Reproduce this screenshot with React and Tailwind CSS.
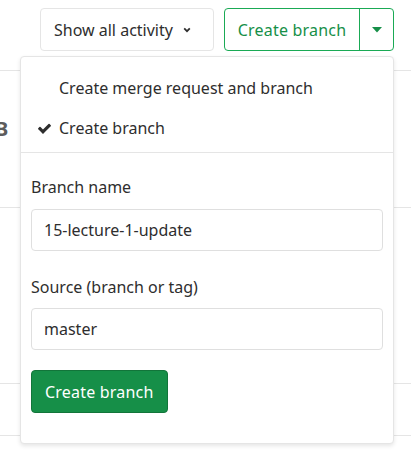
import React from "react"

function Check() {
  return (
    <svg viewBox="0 0 1792 1792" className="w-[15px] h-[15px]" fill="#2e2e2e">
      <path d="M1671 566q0 40-28 68l-724 724-136 136q-28 28-68 28t-68-28l-136-136-362-362q-28-28-28-68t28-68l136-136q28-28 68-28t68 28l294 295 656-657q28-28 68-28t68 28l136 136q28 28 28 68z" />
    </svg>
  )
}

export default function App() {
  return (
    <div className="relative w-[411px] h-[458px] bg-white text-[#2e2e2e] font-['Noto_Sans',sans-serif] text-[16px] overflow-hidden">
      <div className="flex justify-end gap-[10px] pt-2 pr-[17px]">
        <button className="h-[43px] w-[174px] flex items-center pl-[13px] border border-[#e5e5e5] rounded bg-white">
          <span>Show all activity</span>
          <svg viewBox="0 0 10 10" className="ml-[10px] w-[8px] h-[8px]" fill="none" stroke="#2e2e2e" strokeWidth="2.2">
            <polyline points="1.5,3 5,6.5 8.5,3" />
          </svg>
        </button>
        <div className="flex h-[43px] border border-[#1aaa55] rounded">
          <button className="w-[134px] text-[#168f48] tracking-[0.2px]">Create branch</button>
          <button className="w-[34px] border-l border-[#1aaa55] flex items-center justify-center">
            <svg viewBox="0 0 10 6" className="w-[10px] h-[6px]" fill="#168f48">
              <polygon points="0,0 10,0 5,5.5" />
            </svg>
          </button>
        </div>
      </div>

      <div className="mt-[19px] flex flex-col">
        <div className="h-[137px] border-t border-[#e5e5e5] flex items-center">
          <span className="-ml-[5px] -mt-[20px] text-[20px] font-bold text-[#5c5c5c]">B</span>
        </div>
        <div className="h-[176px] border-t border-[#e5e5e5]"></div>
        <div className="h-[52px] border-t border-[#e5e5e5]"></div>
        <div className="border-t border-[#e5e5e5]"></div>
      </div>

      <div className="absolute left-[20px] top-[56px] w-[374px] bg-white border border-[#e5e5e5] rounded shadow-[0_2px_4px_rgba(0,0,0,0.1)]">
        <ul className="pt-[11px] pb-[4px]">
          <li className="h-10 flex items-center pl-[38px]">Create merge request and branch</li>
          <li className="h-10 flex items-center pl-[16px] gap-[7px]">
            <Check />
            <span>Create branch</span>
          </li>
        </ul>
        <div className="border-t border-[#e5e5e5] px-[10px] pt-[22px] pb-[30px]">
          <label className="block leading-6">Branch name</label>
          <input
            className="mt-[10px] block w-full h-[42px] px-3 border border-[#dfdfdf] rounded outline-none"
            defaultValue="15-lecture-1-update"
          />
          <label className="block leading-6 mt-6">Source (branch or tag)</label>
          <input
            className="mt-[9px] block w-full h-[42px] px-3 border border-[#dfdfdf] rounded outline-none"
            defaultValue="master"
          />
          <button className="mt-5 h-[43px] px-[13px] bg-[#168f48] border border-[#12753a] rounded text-white tracking-[0.2px]">
            Create branch
          </button>
        </div>
      </div>
    </div>
  )
}
